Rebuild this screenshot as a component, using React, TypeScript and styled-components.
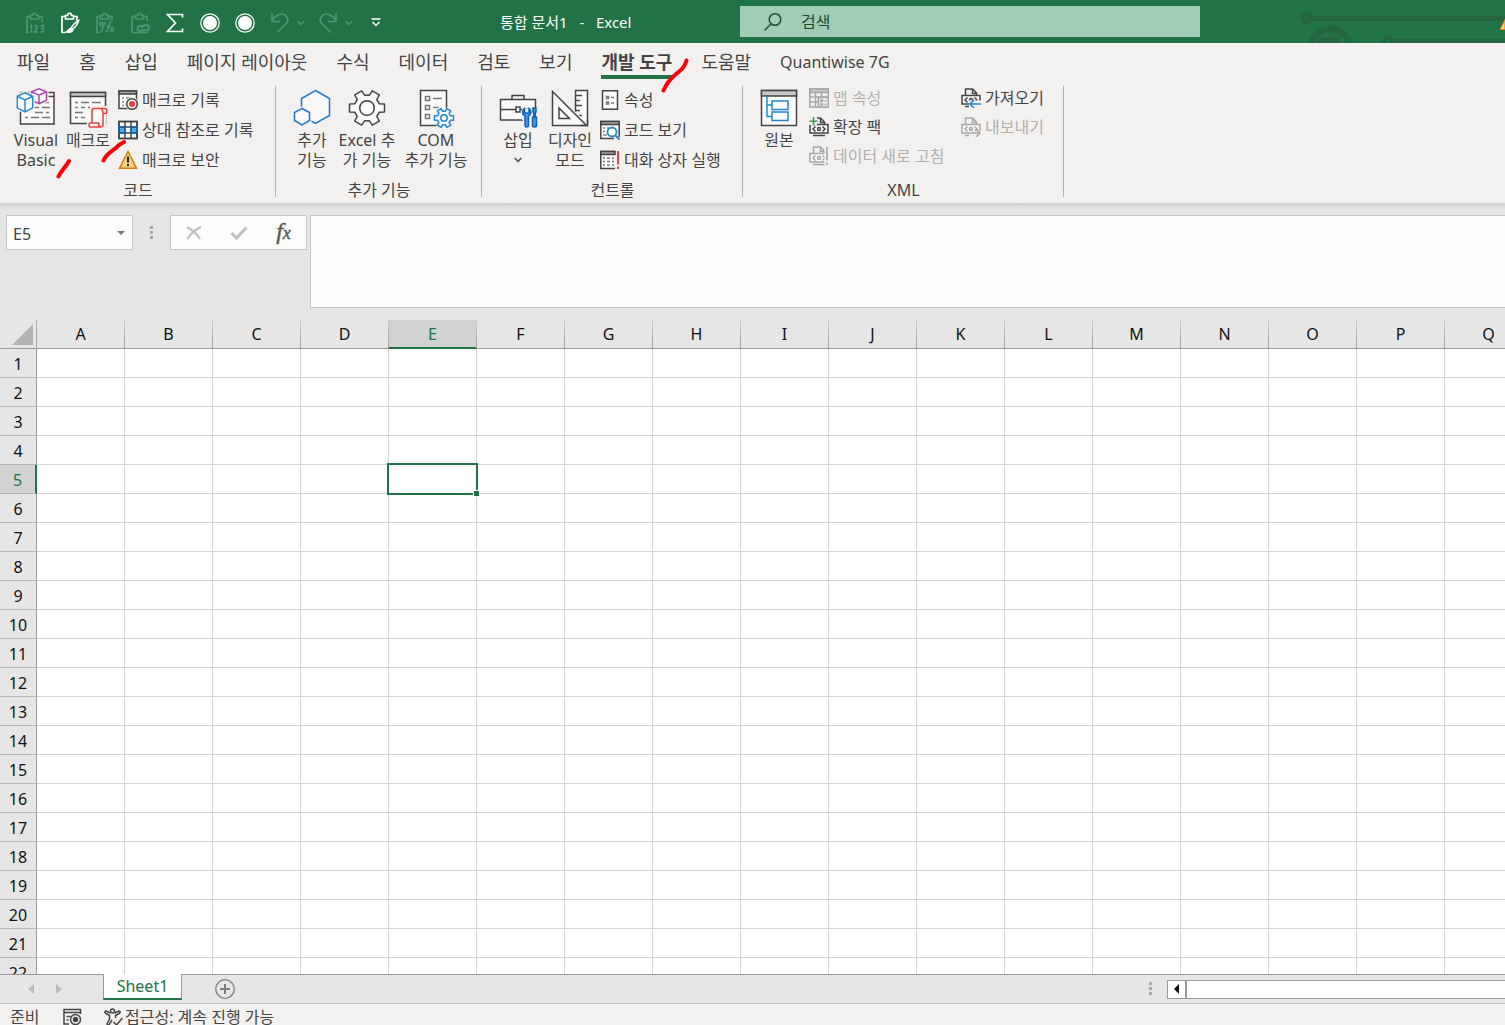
import React, { useEffect, useState } from "react";
import styled, { createGlobalStyle } from "styled-components";

const ink = "#444444";
const green = "#217346";
const blue = "#1e7ac8";
const face = "#fafafa";
const fontStack = `"Noto Sans", "Noto Sans CJK KR", sans-serif`;

const Global = createGlobalStyle`
  * { box-sizing: border-box; }
  body { margin: 0; background: #e6e6e6; font-family: ${fontStack}; color: ${ink}; }
  button, input, textarea { font-family: inherit; color: inherit; margin: 0; border-radius: 0; }
  svg { display: block; flex: none; }
`;

const Window = styled.div`
  display: flex;
  flex-direction: column;
  height: 100vh;
  overflow: hidden;
`;

const PlainButton = styled.button`
  border: 0;
  padding: 0;
  background: transparent;
  display: flex;
  align-items: center;
  justify-content: center;
`;

/* ---------- Title bar ---------- */
const TitleBar = styled.header`
  flex: none;
  height: 43px;
  display: grid;
  grid-template-columns: 500px 240px 460px 1fr;
  align-items: center;
  background: ${green};
  color: #fff;
`;
const QuickAccess = styled.div`
  display: flex;
  height: 43px;
  padding: 2px 0 0 17px;
`;
const QuickButton = styled(PlainButton)<{ $dim?: boolean }>`
  width: 35px;
  color: ${(p) => (p.$dim ? "#4f9470" : "#fff")};
`;
const QuickArrow = styled(QuickButton)`
  width: 13px;
  justify-content: flex-start;
`;
const DocTitle = styled.div`
  font-size: 15px;
  line-height: 20px;
  white-space: pre;
  word-break: keep-all;
`;
const SearchBox = styled.label`
  display: flex;
  align-items: center;
  gap: 18px;
  height: 31px;
  padding-left: 23px;
  background: #a0cdb3;
  color: #1d4e33;
`;
const SearchInput = styled.input`
  flex: 1;
  border: 0;
  padding: 0;
  outline: 0;
  background: transparent;
  font-size: 16px;
  line-height: 20px;
  &::placeholder { color: #1d4e33; opacity: 1; }
`;
const Circuit = styled.svg`
  justify-self: end;
`;

/* ---------- Ribbon ---------- */
const RibbonArea = styled.div`
  position: relative;
  flex: none;
  background: #f3f1f0;
`;
const Tabs = styled.nav`
  display: flex;
  gap: 29px;
  height: 37px;
  padding: 5px 17px 0;
`;
const Tab = styled.button<{ $active?: boolean }>`
  height: 31px;
  border: 0;
  border-bottom: 4px solid ${(p) => (p.$active ? green : "transparent")};
  background: transparent;
  padding: 1px 0 0;
  font-size: 18px;
  font-weight: ${(p) => (p.$active ? 700 : 400)};
  line-height: 26px;
  white-space: nowrap;
`;
const LatinTab = styled(Tab)`
  font-size: 16px;
`;
const Ribbon = styled.div`
  display: flex;
  height: 123px;
`;
const Group = styled.section<{ $width: number }>`
  position: relative;
  width: ${(p) => p.$width}px;
  display: flex;
  flex-direction: column;
  &::after {
    content: "";
    position: absolute;
    right: 0;
    top: 6px;
    bottom: 6px;
    width: 1px;
    background: #b4b2b1;
  }
`;
const GroupBody = styled.div`
  display: flex;
  align-items: flex-start;
  height: 100px;
  padding-left: 10px;
`;
const GroupName = styled.h2`
  margin: 0;
  font-size: 16px;
  font-weight: 400;
  line-height: 20px;
  text-align: center;
`;
const BigButton = styled.button<{ $width?: number }>`
  width: ${(p) => p.$width ?? 52}px;
  border: 0;
  background: transparent;
  padding: 8px 0 0;
  display: flex;
  flex-direction: column;
  align-items: center;
  gap: 2px;
  font-size: 16px;
  line-height: 20px;
  white-space: nowrap;
`;
const MenuArrow = styled.span`
  display: flex;
  align-items: center;
  height: 16px;
`;
const Stack = styled.div<{ $row: number; $top: number; $width?: number }>`
  display: grid;
  grid-auto-rows: ${(p) => p.$row}px;
  padding: ${(p) => p.$top}px 0 0 4px;
  min-width: ${(p) => p.$width ?? 0}px;
`;
const SmallButton = styled(PlainButton)`
  justify-content: flex-start;
  gap: 4px;
  font-size: 16px;
  line-height: 20px;
  white-space: nowrap;
  &:disabled { color: #b1afae; }
`;
const PenMarks = styled.svg`
  position: absolute;
  left: 0;
  top: 0;
  pointer-events: none;
`;

/* ---------- Formula bar ---------- */
const FormulaBar = styled.div`
  flex: none;
  display: flex;
  align-items: flex-start;
  height: 117px;
  padding: 12px 0 0 6px;
  background: linear-gradient(#cfcfcf, #e6e6e6 7px);
`;
const NameBox = styled.div`
  display: flex;
  align-items: center;
  width: 127px;
  height: 35px;
  border: 1px solid #c6c6c6;
  background: #fdfdfd;
  padding: 2px 6px 0;
`;
const NameInput = styled.input`
  width: 100px;
  border: 0;
  padding: 0;
  outline: 0;
  background: transparent;
  font-size: 16px;
`;
const Grip = styled.div`
  width: 37px;
  height: 35px;
  display: flex;
  align-items: center;
  justify-content: center;
`;
const EditButtons = styled.div`
  display: grid;
  grid-template-columns: repeat(3, 45px);
  width: 137px;
  height: 35px;
  border: 1px solid #c6c6c6;
  background: #fdfdfd;
`;
const FxButton = styled(PlainButton)`
  padding-bottom: 4px;
  font: italic 400 24px/26px "Liberation Serif", serif;
  color: #5a5a5a;
  -webkit-text-stroke: 0.5px #5a5a5a;
  sub { font-size: 18px; line-height: 0; vertical-align: baseline; }
`;
const FormulaInput = styled.textarea`
  flex: 1;
  height: 93px;
  margin-left: 3px;
  resize: none;
  outline: 0;
  border: 1px solid #c6c6c6;
  border-right: 0;
  background: #fdfdfd;
  font-size: 16px;
`;

/* ---------- Grid ---------- */
const Sheet = styled.main`
  flex: 1;
  min-height: 0;
  overflow: hidden;
  background: #fff;
`;
const Cells = styled.table`
  table-layout: fixed;
  border-collapse: separate;
  border-spacing: 0;
  font-size: 16px;
  line-height: 26px;
  color: #111;
  th, td { height: 29px; }
  td { padding: 0; border-right: 1px solid #d4d4d4; border-bottom: 1px solid #d4d4d4; }
`;
const Corner = styled.th`
  padding: 0 0 0 12px;
  background: #e6e6e6;
  border-right: 1px solid #ababab;
  border-bottom: 1px solid #999;
`;
const ColHead = styled.th<{ $on: boolean }>`
  padding: 0 0 2px;
  font-weight: 400;
  line-height: 24px;
  border: 0 solid transparent;
  border-right-width: 1px;
  border-image: linear-gradient(#cfcfcf, #999) 1;
  background: ${(p) => (p.$on ? "#d2d2d2" : "#e6e6e6")};
  color: ${(p) => (p.$on ? green : "#111")};
  box-shadow: ${(p) => (p.$on ? `inset 0 -2px ${green}` : "inset 0 -1px #999")};
`;
const RowHead = styled.th<{ $on: boolean }>`
  padding: 2px 0 0;
  font-weight: 400;
  border-bottom: 1px solid #b4b4b4;
  border-right: ${(p) => (p.$on ? `2px solid ${green}` : "1px solid #999")};
  background: ${(p) => (p.$on ? "#d2d2d2" : "#e6e6e6")};
  color: ${(p) => (p.$on ? green : "#111")};
`;
const ActiveCell = styled.td`
  position: relative;
`;
const Selection = styled.div`
  position: absolute;
  inset: -2px;
  border: 2px solid ${green};
  &::after {
    content: "";
    position: absolute;
    right: -4px;
    bottom: -4px;
    width: 5px;
    height: 5px;
    border: 1px solid #fff;
    background: ${green};
  }
`;

/* ---------- Bottom ---------- */
const SheetBar = styled.div`
  flex: none;
  display: flex;
  align-items: center;
  height: 30px;
  border-top: 1px solid #999;
  border-bottom: 1px solid #c6c6c6;
  background: #e6e6e6;
`;
const SheetNav = styled.div`
  display: flex;
  width: 103px;
  padding-left: 17px;
`;
const NavButton = styled(PlainButton)`
  width: 28px;
  height: 24px;
`;
const SheetTab = styled.button`
  align-self: flex-start;
  width: 79px;
  height: 26px;
  margin-top: -1px;
  padding: 0;
  border: 1px solid #999;
  border-top: 0;
  border-bottom: 2px solid ${green};
  background: #fff;
  color: ${green};
  font-size: 16px;
  line-height: 24px;
`;
const AddSheet = styled(PlainButton)`
  margin-left: 32px;
`;
const ScrollArea = styled.div`
  display: flex;
  align-items: center;
  width: 356px;
  margin-left: auto;
`;
const ScrollLeft = styled(PlainButton)`
  width: 19px;
  height: 19px;
  border: 1px solid #999;
  background: #fff;
`;
const ScrollTrack = styled.div`
  flex: 1;
  height: 19px;
  border: 1px solid #999;
  border-right: 0;
  background: #fff;
`;
const ScrollGrip = styled(Grip)`
  width: 18px;
  height: 28px;
  justify-content: flex-start;
`;
const StatusBar = styled.footer`
  flex: none;
  display: flex;
  align-items: flex-start;
  height: 21px;
  overflow: hidden;
  padding-left: 10px;
  background: #f3f1f0;
  font-size: 16px;
  line-height: 26px;
`;
const Ready = styled.span`
  width: 53px;
`;
const StatusButton = styled(PlainButton)`
  height: 26px;
  gap: 2px;
  margin-right: 22px;
  font-size: 16px;
  line-height: 26px;
`;

/* ---------- Drawings ---------- */
const gear = (cx: number, cy: number, ro: number, ri: number) => {
  const pts: string[] = [];
  for (let i = 0; i < 6; i++) {
    const steps: [number, number][] = [[-19, ri], [-13, ro], [13, ro], [19, ri]];
    for (const [d, r] of steps) {
      const a = ((i * 60 + d) * Math.PI) / 180;
      pts.push(`${(cx + r * Math.cos(a)).toFixed(1)},${(cy + r * Math.sin(a)).toFixed(1)}`);
    }
  }
  return pts.join(" ");
};

const Big = ({ children }: { children: React.ReactNode }) => (
  <svg width="40" height="40" viewBox="0 0 40 40" fill="none" stroke={ink} strokeWidth="1.5" aria-hidden="true">{children}</svg>
);
const Small = ({ children, c = ink }: { children: React.ReactNode; c?: string }) => (
  <svg width="20" height="20" viewBox="0 0 20 20" fill="none" stroke={c} strokeWidth="1.5" aria-hidden="true">{children}</svg>
);

const VisualBasicIcon = () => (
  <Big>
    <path d="M4.500 4.500h33.500v31.500h-33.500z" fill={face} />
    <path d="M30 8.500h8" />
    <path d="M18 14.500h3M24 14.500h9M18 19.500h5M26 19.500h8M19 24.500h8M30 24.500h3M9 29.500h3M15 29.500h8M26 29.500h8" stroke="#777" />
    <path d="M23 .8l7.500 3v8.400l-7.500 3.500-7.500-3.500v-8.400z" fill={face} stroke="#f3f1f0" strokeWidth="4" />
    <path d="M23 .8l7.500 3v8.400l-7.500 3.500-7.500-3.500v-8.400zM15.500 3.800l7.500 3.400 7.500-3.400M23 7.200v8.500" fill={face} stroke="#a846b4" />
    <path d="M9 4.800l7.700 3.400v11.600l-7.700 4-7.700-4v-11.600z" fill={face} stroke="#f3f1f0" strokeWidth="4" />
    <path d="M9 4.800l7.700 3.400v11.600l-7.700 4-7.700-4v-11.600zM1.300 8.200l7.700 3.700 7.700-3.700M9 11.900v11.900" fill={face} stroke="#2389d0" />
  </Big>
);
const MacroIcon = () => (
  <Big>
    <path d="M2.500 4.500h35v31h-35z" fill={face} />
    <path d="M2.500 4.500h35v4h-35z" fill="#c8c6c4" />
    <path d="M7 14.500h3M13 14.500h8M24 14.500h9M7 19.500h3M13 19.500h4M20 19.500h8M7 24.500h8M7 29.500h3M13 29.500h4" stroke="#777" />
    <path d="M24 20h13c3 0 3 5 1 5h-2v12c0 1-1 2-2.500 2H22c-2 0-2-4 0-4h2z" fill="#f3f1f0" stroke="#f3f1f0" strokeWidth="4" />
    <path d="M26 20.500h11c2.500 0 2.500 5 .5 5H35v11.500c0 1-1 2-2.500 2H22.500c-2 0-2-4 0-4H24V22.500c0-1 .8-2 2-2zM33.500 20.800c1 1.200 1.500 2.500 1.500 4.700M24 35h6.500c0 2 .5 3.500 2 4" fill={face} stroke="#e8403c" />
  </Big>
);
const AddinIcon = () => (
  <Big>
    <path d="M23.500 2.500l14 8v17l-14 8-14-8v-17z" fill={face} stroke={blue} />
    <path d="M10 20l8 4.500v8.500l-8 4.500-8-4.500v-8.500z" fill="#f3f1f0" stroke="#f3f1f0" strokeWidth="3" />
    <path d="M10 20.500l7.500 4v8l-7.500 4.500-7.500-4.500v-8z" fill={face} stroke={blue} />
  </Big>
);
const GearIcon = () => (
  <Big>
    <polygon points={gear(20, 20, 18, 13)} fill={face} strokeLinejoin="round" />
    <circle cx="20" cy="20" r="7.300" />
  </Big>
);
const ComIcon = () => (
  <Big>
    <path d="M4.500 2.500h26v35h-26z" fill={face} />
    <path d="M9.500 8.500h4v4h-4zM9.500 17.500h4v4h-4zM9.500 26.500h4v4h-4zM17 10.500h9M17 19.500h6" stroke="#777" />
    <polygon points={gear(28, 30, 12, 9)} fill="#f3f1f0" stroke="none" />
    <polygon points={gear(28, 30, 9.8, 6.8)} fill={face} stroke="#2389d0" strokeLinejoin="round" />
    <circle cx="28" cy="30" r="3.200" stroke="#2389d0" />
  </Big>
);
const ToolboxIcon = () => (
  <Big>
    <path d="M2.500 11.500h35v20.500h-35z" fill={face} />
    <path d="M14 11.500v-4h12v4M2.500 21.500h15.500M22 21.500h15.500" />
    <path d="M18 19h4v5h-4z" />
    <path d="M24 21h16v19h-15v-8h-1z" fill="#f3f1f0" stroke="none" />
    <path d="M26.500 20.500c-3 2-2.500 6.500.5 7.500v9.500c0 2 3.500 2 3.500 0V28c3-1 3.500-5.500.500-7.500v4.500h-4.500z" fill="#4a97dc" stroke="#0f62b4" />
    <path d="M35 20h3v4l-.8 1v4h1.300v8.500c0 2-4 2-4 0V29h1.300v-4l-.8-1z" fill="#4a97dc" stroke="#0f62b4" />
  </Big>
);
const DesignIcon = () => (
  <Big>
    <path d="M25.500 2.500h12v35h-12z" fill={face} />
    <path d="M26 7.500h6M26 12.500h4M26 17.500h6M26 22.500h4M28 27.500h4" />
    <path d="M2.500 3.500v34h34z" fill={face} stroke="#f3f1f0" strokeWidth="4" />
    <path d="M2.500 3.500v34h34zM9 20v10.500h10.500z" fill={face} />
    <path d="M30 37.500h7.500v-6" />
  </Big>
);
const SourceIcon = () => (
  <Big>
    <path d="M2.500 2.500h35v35h-35z" fill={face} />
    <path d="M2.500 2.500h35v5.500h-35z" fill="#c8c6c4" />
    <path d="M8 8v20.500h5M8 17h5M13 13h16v8.500h-16zM13 24h16v8.500h-16z" stroke="#2389d0" />
  </Big>
);
const RecordIcon = () => (
  <Small>
    <path d="M1 1h17.500v17.500H1z" fill={face} />
    <path d="M1 1h17.500v3H1z" fill="#a5a3a1" />
    <path d="M4 8h2M8 8h5M4 12h2M4 15.500h2" stroke="#888" />
    <circle cx="14" cy="14" r="6.800" fill="#f3f1f0" stroke="none" />
    <circle cx="14" cy="14" r="5.300" fill={face} />
    <circle cx="14" cy="14" r="3" fill="#f03a36" stroke="none" />
  </Small>
);
const RelativeIcon = () => (
  <Small>
    <path d="M1 1.500h18v17H1z" fill={face} />
    <path d="M1 7h6v6H1zM13 7h6v6h-6z" fill="#58a6e8" stroke="none" />
    <path d="M1 1.500h18v17H1zM7 1.500v17M13 1.500v17M1 7h18M1 13h18" />
    <path d="M1 7h6v6H1zM13 7h6v6h-6z" stroke="#0f62b4" />
  </Small>
);
const WarningIcon = () => (
  <Small>
    <path d="M10 1.500L18.500 18.300H1.500z" fill="#fbd68a" stroke="#e07a10" />
    <path d="M10 6.500v6M10 14v2.300" stroke="#222" strokeWidth="2" />
  </Small>
);
const PropertiesIcon = () => (
  <Small>
    <path d="M2.500 .8h15v18.500h-15z" fill={face} />
    <path d="M6.500 6.500h2v2h-2zM6.500 12h2v2h-2zM11 7.500h3M11 13h3" stroke="#777" />
  </Small>
);
const ViewCodeIcon = () => (
  <Small>
    <path d="M.8 1.500h18.400v17H.8z" fill={face} />
    <path d="M.8 1.500h18.400v3H.8z" fill="#a5a3a1" />
    <path d="M3 8h2M7 8h2M3 11.500h2M3 15h4" stroke="#888" />
    <path d="M14 20v-3h6v3z" fill="#f3f1f0" stroke="none" />
    <circle cx="12" cy="12" r="4.500" stroke="#2389d0" strokeWidth="1.800" fill={face} />
    <path d="M15.500 15.500l4 4" stroke="#2389d0" strokeWidth="2" />
  </Small>
);
const DialogIcon = () => (
  <Small>
    <path d="M15 1.500H.8v17H15" fill={face} />
    <path d="M.8 1.500H15v3H.8z" fill="#a5a3a1" />
    <path d="M3 8h2M7 8h3M12 8h2M3 11.500h2M7 11.500h3M12 11.500h2M3 15h2M7 15h3M12 15h2" stroke="#777" />
    <path d="M18 1v13.500M18 16.500v2.500" stroke="#e8403c" strokeWidth="2" />
  </Small>
);
const MapIcon = () => (
  <Small c="#a8a6a5">
    <path d="M.8 1h18.400v18H.8z" />
    <path d="M.8 1h18.400v3.500H.8z" fill="#c8c6c4" />
    <path d="M1 9h18M1 14h8M6.500 4.500v14M12.500 4.500v4" />
    <path d="M9.500 9.500h9.700v9.500H9.500z" fill="#f3f1f0" />
    <path d="M12 12h1.500v1.500H12zM15.500 13h2M12 16h1.500v1H12zM15.500 16.500h2" />
  </Small>
);
const XmlFile = ({ c, children }: { c: string; children?: React.ReactNode }) => (
  <Small c={c}>
    <path d="M4.500 7V1h7l4 4v2M11.500 1v4.500h4M4 18.500h12" />
    <path d="M1 7.500h18v8.500H1z" fill={face} />
    <path d="M6.500 9.500L4 12l2.500 2.500M13.500 9.500L16 12l-2.500 2.500" />
    <circle cx="10" cy="12" r="1.500" />
    {children}
  </Small>
);
const ExpansionIcon = () => (
  <XmlFile c={ink}>
    <path d="M0 0h8v8H0z" fill="#f3f1f0" stroke="none" />
    <path d="M4.500 0v8M.5 4.200h8" stroke="#3a9b4f" strokeWidth="1.600" />
  </XmlFile>
);
const RefreshIcon = () => (
  <XmlFile c="#a8a6a5">
    <path d="M15.500 0h4.500v20h-4.500z" fill="#f3f1f0" stroke="none" />
    <path d="M18 1v13.500M18 16.500v2.500" strokeWidth="1.600" />
  </XmlFile>
);
const ImportIcon = () => (
  <XmlFile c={ink}>
    <path d="M8 12.500h12v7.500H8z" fill="#f3f1f0" stroke="none" />
    <path d="M20 16H9M13 12l-4 4 4 4" stroke="#2389d0" strokeWidth="1.600" />
  </XmlFile>
);
const ExportIcon = () => (
  <XmlFile c="#a8a6a5">
    <path d="M8 14h12v6H8z" fill="#f3f1f0" stroke="none" />
    <path d="M8 16h11M15 12l4 4-4 4" />
  </XmlFile>
);

const Quick = ({ children }: { children: React.ReactNode }) => (
  <svg width="20" height="22" viewBox="0 0 20 22" fill="none" stroke="currentColor" strokeWidth="1.700" aria-hidden="true">{children}</svg>
);
const ClipBase = () => <path d="M5.500 20.500H2V4.500h3.500M13.500 4.500H17V9M5.500 7V3.500h2c0-3 4-3 4 0h2V7z" />;
const PasteValuesIcon = () => (
  <Quick>
    <path d="M4 20.500H2V4.500h3.500M13.500 4.500H17V10M5.500 7V3.500h2c0-3 4-3 4 0h2V7z" />
    <path d="M5 14.500l1.500-1v7.500M9.500 14.200c1-1.500 3.500-.8 3 1.200L9.500 20h3.500M15.500 13.500h3l-1.500 3c2.500.2 2 4-1.500 3.300" />
  </Quick>
);
const PasteFormatIcon = () => (
  <Quick>
    <ClipBase />
    <path d="M18.800 8.500c-3 1.500-6 4.500-7.500 7l1.500 1.500c2.500-2 5-5 6-8.500z" strokeWidth="1.400" />
    <path d="M11 16c-2.500 0-2 3-5 4 2.500 1 7 .5 7-2.500z" fill="currentColor" strokeWidth="1.200" />
  </Quick>
);
const PasteFormulaIcon = () => (
  <Quick>
    <ClipBase />
    <circle cx="6.500" cy="12" r="1.700" />
    <path d="M10.500 10L6 20M16 10.500c-3-1-2 9.500-5.500 9.500M11.500 14h4M15 15l4 5M19 15l-4 5" />
  </Quick>
);
const PasteLinkIcon = () => (
  <Quick>
    <ClipBase />
    <path d="M14 17.500c-2 2-6.500 2-6.500-1s4-3.500 6-1M12 15.500c1.500-3.500 7-3 7 0s-3.500 3.500-5.500 2" strokeWidth="2" />
    <path d="M5 20.500h13" />
  </Quick>
);
const CircleIcon = () => (
  <Quick>
    <circle cx="10" cy="11" r="9.200" strokeWidth="1.200" />
    <circle cx="10" cy="11" r="7" fill="currentColor" stroke="none" />
  </Quick>
);
const ChevronSvg = () => (
  <svg width="8" height="6" viewBox="0 0 8 6" fill="none" stroke="currentColor" strokeWidth="1.500" aria-hidden="true">
    <path d="M.7 1L4 4.500 7.300 1" />
  </svg>
);
const Dots = () => (
  <svg width="4" height="14" viewBox="0 0 4 14" fill="#a6a6a6" aria-hidden="true">
    <path d="M0 0h3v3H0zM0 5h3v3H0zM0 10h3v3H0z" />
  </svg>
);

/* Only as many columns and rows as the window has room for. */
const HEAD_WIDTH = 37;
const COL_WIDTH = 88;
const ROW_HEIGHT = 29;
const CHROME_HEIGHT = 400;

const measure = () => ({
  cols: Math.min(26, Math.max(5, Math.ceil((window.innerWidth - HEAD_WIDTH) / COL_WIDTH))),
  rows: Math.max(5, Math.ceil((window.innerHeight - CHROME_HEIGHT) / ROW_HEIGHT)),
});

const Grid = () => {
  const [size, setSize] = useState(measure);
  useEffect(() => {
    const onResize = () => setSize(measure());
    window.addEventListener("resize", onResize);
    return () => window.removeEventListener("resize", onResize);
  }, []);
  const columns = "ABCDEFGHIJKLMNOPQRSTUVWXYZ".slice(0, size.cols).split("");
  const rows = Array.from({ length: size.rows }, (_, i) => i + 1);
  return (
    <Cells style={{ width: HEAD_WIDTH + COL_WIDTH * size.cols }}>
      <colgroup>
        <col style={{ width: HEAD_WIDTH }} />
        {columns.map((c) => <col key={c} />)}
      </colgroup>
      <thead>
        <tr>
          <Corner aria-label="모두 선택">
            <svg width="21" height="21" viewBox="0 0 21 21" fill="#b4b4b4" aria-hidden="true"><path d="M21 0v21H0z" /></svg>
          </Corner>
          {columns.map((c) => <ColHead key={c} scope="col" $on={c === "E"}>{c}</ColHead>)}
        </tr>
      </thead>
      <tbody>
        {rows.map((r) => (
          <tr key={r}>
            <RowHead scope="row" $on={r === 5}>{r}</RowHead>
            {columns.map((c) =>
              r === 5 && c === "E" ? <ActiveCell key={c}><Selection /></ActiveCell> : <td key={c} />
            )}
          </tr>
        ))}
      </tbody>
    </Cells>
  );
};

export default function App() {
  return (
    <Window>
      <Global />
      <TitleBar>
        <QuickAccess>
          <QuickButton $dim aria-label="값 붙여넣기"><PasteValuesIcon /></QuickButton>
          <QuickButton aria-label="서식 붙여넣기"><PasteFormatIcon /></QuickButton>
          <QuickButton $dim aria-label="수식 붙여넣기"><PasteFormulaIcon /></QuickButton>
          <QuickButton $dim aria-label="연결 붙여넣기"><PasteLinkIcon /></QuickButton>
          <QuickButton aria-label="합계">
            <Quick><path d="M17.500 5.500V2.500H2.500L10.500 11 2.500 19.500h15v-3" /></Quick>
          </QuickButton>
          <QuickButton aria-label="매크로 1"><CircleIcon /></QuickButton>
          <QuickButton aria-label="매크로 2"><CircleIcon /></QuickButton>
          <QuickButton $dim aria-label="실행 취소">
            <Quick><path d="M2 1v8.500h8.500M2 9C5 3 11 .5 15 3c4.500 3 3 7 0 10l-8 7.500" /></Quick>
          </QuickButton>
          <QuickArrow $dim aria-label="실행 취소 목록"><ChevronSvg /></QuickArrow>
          <QuickButton $dim aria-label="다시 실행">
            <Quick><path d="M18 1v8.500H9.500M18 9C15 3 9 .5 5 3c-4.500 3-3 7 0 10l8 7.500" /></Quick>
          </QuickButton>
          <QuickArrow $dim aria-label="다시 실행 목록"><ChevronSvg /></QuickArrow>
          <QuickButton aria-label="도구 모음 사용자 지정">
            <svg width="10" height="9" viewBox="0 0 10 9" fill="none" stroke="currentColor" strokeWidth="1.500" aria-hidden="true">
              <path d="M.5 1h9M1.500 4L5 7.500 8.500 4" />
            </svg>
          </QuickButton>
        </QuickAccess>
        <DocTitle>{"통합 문서1   -   Excel"}</DocTitle>
        <SearchBox>
          <svg width="20" height="20" viewBox="0 0 20 20" fill="none" stroke="currentColor" strokeWidth="1.500" aria-hidden="true">
            <circle cx="12" cy="7.500" r="5.800" />
            <path d="M8 12l-6.500 6.500" />
          </svg>
          <SearchInput aria-label="검색" placeholder="검색" />
        </SearchBox>
        <Circuit width="205" height="43" viewBox="0 0 205 43" fill="none" stroke="#24643f" aria-hidden="true">
          <circle cx="6.500" cy="18" r="4" strokeWidth="4" />
          <path d="M11 18.500h194M93 41.500h112" strokeWidth="5" />
          <circle cx="30.500" cy="49" r="20" strokeWidth="6" />
          <path d="M18 40.500h21" strokeWidth="6" />
          <circle cx="88" cy="42" r="4" strokeWidth="4" />
          <path d="M200 29.500l5-10v10z" fill="#fbd68a" stroke="#e07a10" />
        </Circuit>
      </TitleBar>

      <RibbonArea>
        <Tabs>
          <Tab>파일</Tab>
          <Tab>홈</Tab>
          <Tab>삽입</Tab>
          <Tab>페이지 레이아웃</Tab>
          <Tab>수식</Tab>
          <Tab>데이터</Tab>
          <Tab>검토</Tab>
          <Tab>보기</Tab>
          <Tab $active>개발 도구</Tab>
          <Tab>도움말</Tab>
          <LatinTab>Quantiwise 7G</LatinTab>
        </Tabs>
        <Ribbon>
          <Group $width={276}>
            <GroupBody>
              <BigButton><VisualBasicIcon /><span>Visual<br />Basic</span></BigButton>
              <BigButton><MacroIcon /><span>매크로</span></BigButton>
              <Stack $row={30} $top={5}>
                <SmallButton><RecordIcon />매크로 기록</SmallButton>
                <SmallButton><RelativeIcon />상대 참조로 기록</SmallButton>
                <SmallButton><WarningIcon />매크로 보안</SmallButton>
              </Stack>
            </GroupBody>
            <GroupName>코드</GroupName>
          </Group>
          <Group $width={206}>
            <GroupBody>
              <BigButton><AddinIcon /><span>추가<br />기능</span></BigButton>
              <BigButton $width={58}><GearIcon /><span>Excel 추<br />가 기능</span></BigButton>
              <BigButton $width={80}><ComIcon /><span>COM<br />추가 기능</span></BigButton>
            </GroupBody>
            <GroupName>추가 기능</GroupName>
          </Group>
          <Group $width={261}>
            <GroupBody>
              <BigButton>
                <ToolboxIcon />
                <span>삽입</span>
                <MenuArrow><ChevronSvg /></MenuArrow>
              </BigButton>
              <BigButton><DesignIcon /><span>디자인<br />모드</span></BigButton>
              <Stack $row={30} $top={5}>
                <SmallButton><PropertiesIcon />속성</SmallButton>
                <SmallButton><ViewCodeIcon />코드 보기</SmallButton>
                <SmallButton><DialogIcon />대화 상자 실행</SmallButton>
              </Stack>
            </GroupBody>
            <GroupName>컨트롤</GroupName>
          </Group>
          <Group $width={321}>
            <GroupBody>
              <BigButton><SourceIcon /><span>원본</span></BigButton>
              <Stack $row={29} $top={3} $width={152}>
                <SmallButton disabled><MapIcon />맵 속성</SmallButton>
                <SmallButton><ExpansionIcon />확장 팩</SmallButton>
                <SmallButton disabled><RefreshIcon />데이터 새로 고침</SmallButton>
              </Stack>
              <Stack $row={29} $top={3}>
                <SmallButton><ImportIcon />가져오기</SmallButton>
                <SmallButton disabled><ExportIcon />내보내기</SmallButton>
              </Stack>
            </GroupBody>
            <GroupName>XML</GroupName>
          </Group>
        </Ribbon>
        <PenMarks width="700" height="140" viewBox="0 43 700 140" fill="none" stroke="#fb0007" strokeWidth="4" strokeLinecap="round" aria-hidden="true">
          <path d="M58.500 176.500c2-5 7-9 10.500-15.500M103.500 160.500c3-7 8-9 13-13 2-3 5-4 7.500-5.500M663.500 90.500c3-7 6-11 12-16 6-5 9-7 11-14" />
        </PenMarks>
      </RibbonArea>

      <FormulaBar>
        <NameBox>
          <NameInput aria-label="이름 상자" defaultValue="E5" />
          <PlainButton aria-label="이름 목록">
            <svg width="16" height="5" viewBox="0 0 16 5" fill="#777" aria-hidden="true"><path d="M4 0h8L8 4z" /></svg>
          </PlainButton>
        </NameBox>
        <Grip><Dots /></Grip>
        <EditButtons>
          <PlainButton aria-label="취소">
            <svg width="16" height="14" viewBox="0 0 16 14" fill="none" stroke="#c0c0c0" strokeWidth="2.200" aria-hidden="true"><path d="M1 1c5 3 10 7 13 12M15 1C10 3 4 8 1.500 13" /></svg>
          </PlainButton>
          <PlainButton aria-label="입력">
            <svg width="18" height="14" viewBox="0 0 18 14" fill="none" stroke="#c0c0c0" strokeWidth="3" aria-hidden="true"><path d="M1.500 7l5 5L16.500 1.500" /></svg>
          </PlainButton>
          <FxButton aria-label="함수 삽입"><span>f<sub>x</sub></span></FxButton>
        </EditButtons>
        <FormulaInput aria-label="수식 입력줄" />
      </FormulaBar>

      <Sheet>
        <Grid />
      </Sheet>

      <SheetBar>
        <SheetNav>
          <NavButton aria-label="이전 시트">
            <svg width="6" height="10" viewBox="0 0 6 10" fill="#bdbdbd" aria-hidden="true"><path d="M6 0v10L0 5z" /></svg>
          </NavButton>
          <NavButton aria-label="다음 시트">
            <svg width="6" height="10" viewBox="0 0 6 10" fill="#bdbdbd" aria-hidden="true"><path d="M0 0v10l6-5z" /></svg>
          </NavButton>
        </SheetNav>
        <SheetTab>Sheet1</SheetTab>
        <AddSheet aria-label="새 시트">
          <svg width="22" height="22" viewBox="0 0 22 22" fill="none" stroke="#7d7d7d" aria-hidden="true">
            <circle cx="11" cy="11" r="9.300" strokeWidth="1.300" />
            <path d="M11 6v10M6 11h10" strokeWidth="2" />
          </svg>
        </AddSheet>
        <ScrollArea>
          <ScrollGrip><Dots /></ScrollGrip>
          <ScrollLeft aria-label="왼쪽으로 스크롤">
            <svg width="5" height="10" viewBox="0 0 5 10" fill="#111" aria-hidden="true"><path d="M5 0v10L0 5z" /></svg>
          </ScrollLeft>
          <ScrollTrack />
        </ScrollArea>
      </SheetBar>

      <StatusBar>
        <Ready>준비</Ready>
        <StatusButton aria-label="매크로 기록">
          <svg width="19" height="18" viewBox="0 0 19 18" fill="none" stroke={ink} strokeWidth="1.500" aria-hidden="true">
            <path d="M6 16H1V1.500h16.500V6M1 4.500h16.500M3.500 8.500h4M3.500 12h2" />
            <circle cx="12.500" cy="11.500" r="5" />
            <circle cx="12.500" cy="11.500" r="2" fill={ink} />
          </svg>
        </StatusButton>
        <StatusButton>
          <svg width="19" height="18" viewBox="0 0 19 18" fill="none" stroke={ink} strokeWidth="1.500" aria-hidden="true">
            <circle cx="8.500" cy="3" r="2" />
            <path d="M6.500 5L2 3C0 3.500 1 5 2 5.500l3.500 2V11L3 16c.5 1.500 2 1 2.500 0l2.500-4M10.500 5L15 3c2 .5 1 2 0 2.500l-3.500 2V10M9.500 14l3 3 6-7" />
          </svg>
          접근성: 계속 진행 가능
        </StatusButton>
      </StatusBar>
    </Window>
  );
}
